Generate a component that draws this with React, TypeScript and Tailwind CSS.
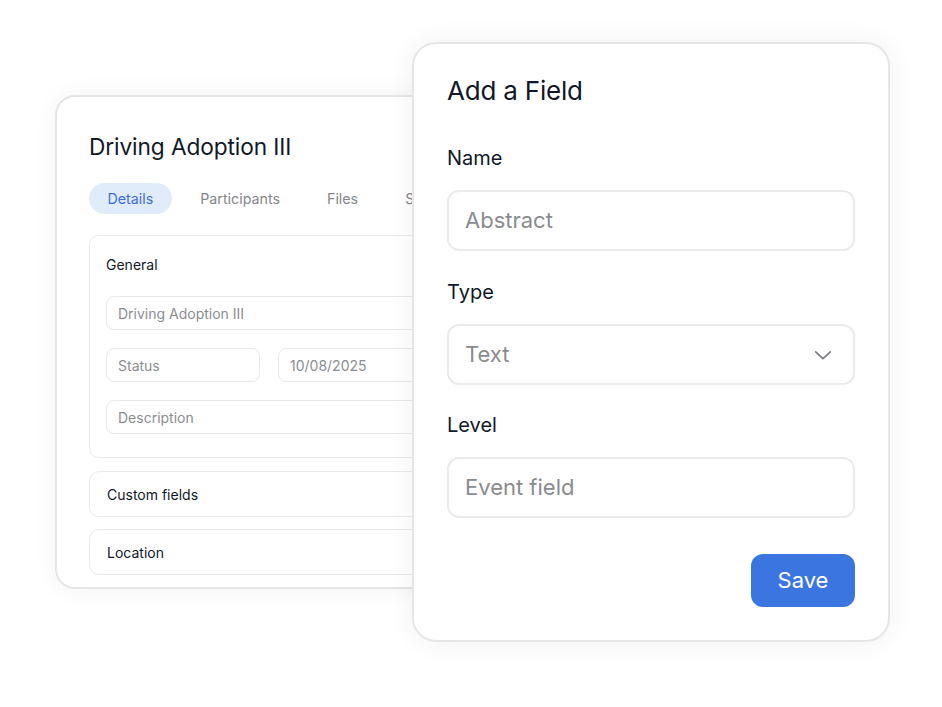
import React from "react";

const font = { fontFamily: "Inter, 'Noto Sans', sans-serif" };

function SmallInput({ text, className = "" }: { text: string; className?: string }) {
  return (
    <div
      className={`h-[34px] flex items-center px-[11px] rounded-[8px] border border-[#e7e8ea] text-[14px] text-[#8b8d91] bg-white ${className}`}
    >
      {text}
    </div>
  );
}

function BigInput({ text, chevron = false }: { text: string; chevron?: boolean }) {
  return (
    <div className="h-[61px] flex items-center justify-between pl-[16px] pr-[19px] rounded-[12px] border-2 border-[#ebebed] text-[22px] text-[#8a8b8f] bg-white">
      <span>{text}</span>
      {chevron && (
        <svg width="22" height="22" viewBox="0 0 24 24" fill="none" stroke="#7b7c80" strokeWidth="1.8" strokeLinecap="round" strokeLinejoin="round">
          <path d="M4 8.5l8 7.5 8-7.5" />
        </svg>
      )}
    </div>
  );
}

export default function App() {
  return (
    <div className="relative w-[942px] h-[707px] bg-white overflow-hidden" style={font}>
      {/* Back card */}
      <div className="absolute left-[55px] top-[95px] w-[420px] h-[494px] rounded-[20px] border-2 border-[#e6e6e8] bg-white shadow-[0_0_24px_rgba(0,0,0,0.05)] pt-[34px] pl-[32px] pr-[32px] flex flex-col">
        <div className="text-[22.7px] leading-[32px] text-[#111827] tracking-[-0.1px]">Driving Adoption III</div>
        <div className="mt-[20px] flex gap-[10px] text-[14.25px] leading-[31px]">
          <div className="px-[18.5px] rounded-full bg-[#e1ecfb] text-[#3b6fd6]">Details</div>
          <div className="px-[18.5px] text-[#85878b]">Participants</div>
          <div className="px-[18.5px] text-[#85878b]">Files</div>
          <div className="px-[18.5px] text-[#85878b]">Sessions</div>
        </div>
        <div className="mt-[21px] w-[400px] rounded-[10px] border border-[#e8e9eb] pl-[16px] pt-[19px] pb-[23px] flex flex-col">
          <div className="text-[14px] leading-[20px] text-[#111827]">General</div>
          <SmallInput text="Driving Adoption III" className="mt-[21px]" />
          <div className="mt-[18px] flex gap-[18px]">
            <SmallInput text="Status" className="w-[154px]" />
            <SmallInput text="10/08/2025" className="flex-1" />
          </div>
          <SmallInput text="Description" className="mt-[18px]" />
        </div>
        <div className="mt-[13px] w-[400px] h-[46px] rounded-[10px] border border-[#e8e9eb] pl-[17px] flex items-center text-[14px] text-[#111827]">
          Custom fields
        </div>
        <div className="mt-[12px] w-[400px] h-[46px] rounded-[10px] border border-[#e8e9eb] pl-[17px] flex items-center text-[14px] text-[#111827]">
          Location
        </div>
      </div>

      {/* Front card */}
      <div className="absolute left-[412px] top-[42px] w-[478px] h-[600px] rounded-[24px] border-2 border-[#e6e6e8] bg-white shadow-[0_0_28px_rgba(0,0,0,0.06)] pt-[29px] px-[33px] flex flex-col">
        <div className="text-[26px] leading-[36px] text-[#111827] tracking-[-0.2px]">Add a Field</div>
        <div className="mt-[35px] text-[20px] leading-[28px] text-[#111827]">Name</div>
        <div className="mt-[18px]">
          <BigInput text="Abstract" />
        </div>
        <div className="mt-[27px] text-[20px] leading-[28px] text-[#111827]">Type</div>
        <div className="mt-[18px]">
          <BigInput text="Text" chevron />
        </div>
        <div className="mt-[26px] text-[20px] leading-[28px] text-[#111827]">Level</div>
        <div className="mt-[18px]">
          <BigInput text="Event field" />
        </div>
        <div className="mt-[36px] flex justify-end">
          <div className="w-[104px] h-[53px] rounded-[12px] bg-[#3b76e0] text-white text-[22px] flex items-center justify-center">
            Save
          </div>
        </div>
      </div>
    </div>
  );
}
